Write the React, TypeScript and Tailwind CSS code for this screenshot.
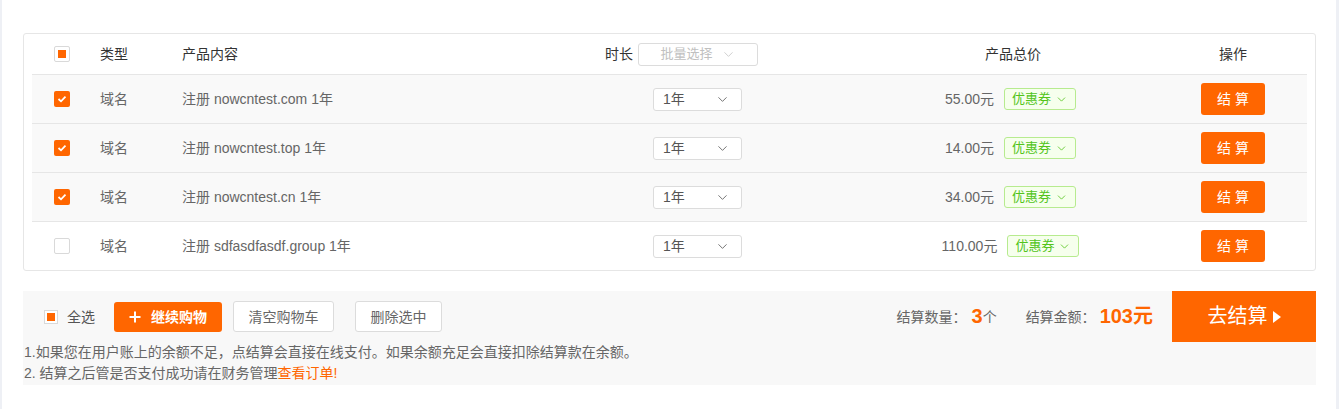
import { ChevronDown } from "lucide-react"

type Item = { name: string; price: string; checked: boolean }

const items: Item[] = [
  { name: "注册 nowcntest.com 1年", price: "55.00元", checked: true },
  { name: "注册 nowcntest.top 1年", price: "14.00元", checked: true },
  { name: "注册 nowcntest.cn 1年", price: "34.00元", checked: true },
  { name: "注册 sdfasdfasdf.group 1年", price: "110.00元", checked: false },
]

const font = { fontFamily: '"Liberation Sans", "Noto Sans CJK SC", sans-serif' }

const CheckBox = ({ state }: { state: "on" | "off" | "part" }) => {
  if (state === "on") {
    return (
      <div className="w-4 h-4 rounded-[2px] bg-[#ff6600] flex items-center justify-center">
        <svg width="10" height="8" viewBox="0 0 10 8">
          <polyline points="1.5,4 4,6.3 8.5,1.7" fill="none" stroke="#fff" strokeWidth="1.8" />
        </svg>
      </div>
    )
  }
  return (
    <div className="w-4 h-4 rounded-[2px] border border-[#d9d9d9] bg-white flex items-center justify-center">
      {state === "part" && <div className="w-2 h-2 bg-[#ff6600]" />}
    </div>
  )
}

const App = () => {
  return (
    <div className="w-[1339px] h-[409px] bg-[#eef0f5] flex" style={font}>
      <div className="ml-[2px] w-[1334px] h-[409px] bg-white pt-[33px] pl-[21px]">
        {/* cart table */}
        <div className="w-[1293px] border border-[#e6e6e6] rounded-[3px] px-2 text-sm">
          <div className="grid grid-cols-[68px_82px_1fr_266px_302px_148px] h-[41px] items-center border-b border-[#e6e6e6] text-[#333]">
            <div className="pl-[22px]"><CheckBox state="part" /></div>
            <div>类型</div>
            <div>产品内容</div>
            <div className="flex items-center pl-[14px]">
              <span>时长</span>
              <div className="ml-[5px] w-[120px] h-[23px] border border-[#dcdcdc] rounded-[3px] flex items-center justify-center gap-[8px] text-[13px] text-[#c0c0c0]">
                批量选择
                <ChevronDown size={15} strokeWidth={1.2} />
              </div>
            </div>
            <div className="text-center pl-[10px]">产品总价</div>
            <div className="text-center">操作</div>
          </div>
          {items.map((it, i) => (
            <div
              key={i}
              className={`grid grid-cols-[68px_82px_1fr_266px_302px_148px] items-center text-[#666] ${
                i < items.length - 1 ? "h-[49px] border-b border-[#e6e6e6]" : "h-[48px]"
              } ${it.checked ? "bg-[#f9f9f9]" : "bg-white"}`}
            >
              <div className="pl-[22px]"><CheckBox state={it.checked ? "on" : "off"} /></div>
              <div>域名</div>
              <div>{it.name}</div>
              <div className="pl-[62px]">
                <div className="w-[89px] h-[23px] bg-white border border-[#dcdcdc] rounded-[3px] flex items-center justify-between pl-[9px] pr-[11px] text-[#555]">
                  1年
                  <ChevronDown size={15} strokeWidth={1.3} />
                </div>
              </div>
              <div className="flex items-center justify-center gap-[10px] pl-[5px]">
                <span>{it.price}</span>
                <div className="h-[22px] px-[7px] border border-[#b7eb8f] bg-[#f6ffed] rounded-[3px] flex items-center gap-[4px] text-[13px] text-[#52c41a]">
                  优惠券
                  <ChevronDown size={13} strokeWidth={1.5} />
                </div>
              </div>
              <div className="flex justify-center">
                <button className="w-16 h-8 rounded-[3px] bg-[#ff6600] text-white text-sm">结 算</button>
              </div>
            </div>
          ))}
        </div>

        {/* bottom bar */}
        <div className="mt-[20px] w-[1293px] h-[94px] bg-[#f8f8f8]">
          <div className="flex h-[51px] items-center">
            <div className="flex items-center pl-[21px] text-sm text-[#555]">
              <div className="w-[14px] h-[14px] border border-[#d9d9d9] bg-white flex items-center justify-center">
                <div className="w-2 h-2 bg-[#ff6600]" />
              </div>
              <span className="ml-[9px]">全选</span>
              <button className="ml-[19px] w-[108px] h-[30px] rounded-[3px] bg-[#ff6600] text-white font-bold flex items-center justify-center gap-[10px]">
                <svg width="12" height="12" viewBox="0 0 12 12">
                  <path d="M6 0.5v11M0.5 6h11" stroke="#fff" strokeWidth="2" />
                </svg>
                继续购物
              </button>
              <button className="ml-[11px] w-[101px] h-[31px] rounded-[3px] bg-white border border-[#dcdcdc] text-[#666]">清空购物车</button>
              <button className="ml-[21px] w-[87px] h-[31px] rounded-[3px] bg-white border border-[#dcdcdc] text-[#666]">删除选中</button>
            </div>
            <div className="ml-auto flex items-center text-sm text-[#666]">
              <span>结算数量：</span>
              <span className="ml-[5px] text-[20px] font-bold text-[#ff6600]">3</span>
              <span>个</span>
              <span className="ml-[29px]">结算金额：</span>
              <span className="ml-[4px] text-[20px] font-bold text-[#ff6600]">103元</span>
              <button className="ml-[19px] w-[144px] h-[51px] bg-[#ff6600] text-white text-[20px] flex items-center justify-center gap-[5px]">
                去结算
                <svg width="8" height="12" viewBox="0 0 8 12">
                  <path d="M0 0L8 6L0 12Z" fill="#fff" />
                </svg>
              </button>
            </div>
          </div>
          <div className="pl-[1px] text-sm text-[#666] leading-[21px]">
            <p>1.如果您在用户账上的余额不足，点结算会直接在线支付。如果余额充足会直接扣除结算款在余额。</p>
            <p>
              2. 结算之后管是否支付成功请在财务管理<span className="text-[#ff6600]">查看订单!</span>
            </p>
          </div>
        </div>
      </div>
    </div>
  )
}

export default App
